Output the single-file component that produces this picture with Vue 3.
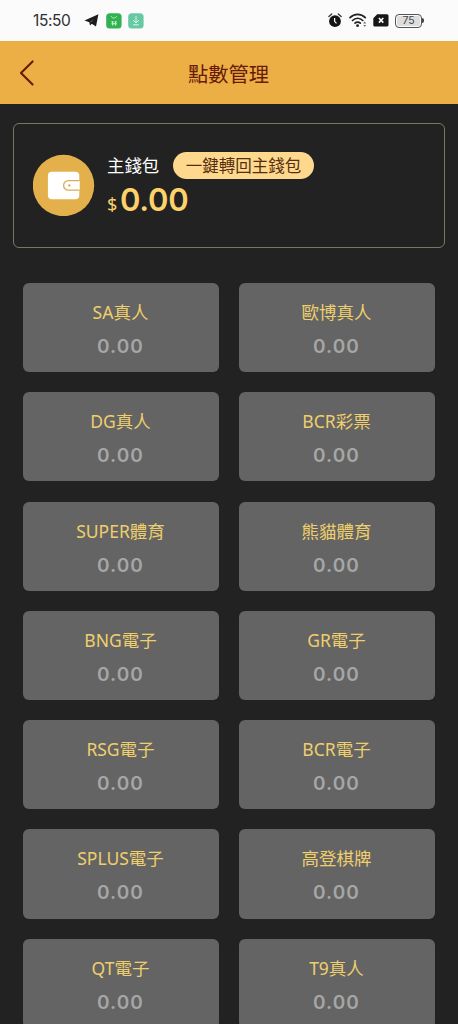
<script setup>
const wallets = [
  'SA真人', '歐博真人',
  'DG真人', 'BCR彩票',
  'SUPER體育', '熊貓體育',
  'BNG電子', 'GR電子',
  'RSG電子', 'BCR電子',
  'SPLUS電子', '高登棋牌',
  'QT電子', 'T9真人',
].map((name) => ({ name, balance: '0.00' }))
</script>

<template>
  <div class="screen">
    <div class="status">
      <span class="time">15:50</span>
      <svg class="plane" width="15" height="13" viewBox="0 0 15 13">
        <path d="M14.4.3 12 12.6 7.8 9.8 6 11.6 5.3 8.2.5 6.6Z" fill="#1c1c1c" />
        <path d="M5.8 8.1 10.4 4.4 6.9 8.6" fill="#666" />
      </svg>
      <svg class="bag" width="16" height="16" viewBox="0 0 16 16">
        <rect x=".2" y=".2" width="15.4" height="15.4" rx="3.6" fill="#31b150" />
        <path d="M5.2 3.2c.6 2.4 4.8 2.4 5.4 0" fill="none" stroke="#b9efc3" stroke-width="1" />
        <path d="M5.4 8.7h2.2M8.6 8.7h2.2M5.4 10.7h5.4M6.6 8.4v4.2M9.6 8.4v4.2" fill="none" stroke="#c9f5d0" stroke-width="1.1" />
      </svg>
      <svg class="down" width="16" height="16" viewBox="0 0 16 16">
        <rect x=".2" y=".2" width="15.4" height="15.4" rx="3.6" fill="#66c9a4" />
        <path d="M8 3.2v6.6M5.2 7.2 8 10l2.8-2.8M5.2 11.8h5.6" fill="none" stroke="#d8f8ea" stroke-width="1" />
      </svg>
      <span class="grow"></span>
      <svg class="alarm" width="14" height="15" viewBox="0 0 14 15">
        <circle cx="7" cy="8.2" r="5.9" fill="#151515" />
        <path d="M.9 3.6 3.7 1M13.1 3.6 10.3 1" stroke="#333" stroke-width="1.3" stroke-linecap="round" />
        <path d="M6.6 5v3.3l1.9 2" fill="none" stroke="#fff" stroke-width="1.2" />
      </svg>
      <svg class="wifi" width="19" height="15" viewBox="0 0 19 15">
        <g fill="none" stroke="#222" stroke-width="1.7" stroke-linecap="round">
          <path d="M1 4.6C5.3.2 12 .2 16.3 4.6" />
          <path d="M3.5 7.5c3-3 7.3-3 10.3 0" />
          <path d="M6 10.2c1.5-1.5 3.8-1.5 5.3 0" />
        </g>
        <circle cx="8.6" cy="12.7" r="1.4" fill="#222" />
        <path d="m14.2 10.4 1.5-1.8 1.5 1.8ZM14.2 12l1.5 1.8 1.5-1.8Z" fill="#666" />
      </svg>
      <svg class="sim" width="16" height="13" viewBox="0 0 16 13">
        <path d="M4.2.3H14a1.5 1.5 0 0 1 1.5 1.5v9A1.5 1.5 0 0 1 14 12.5H1.8A1.5 1.5 0 0 1 .3 11V4.2Z" fill="#171717" />
        <path d="m5.9 4 4.4 4.6m0-4.6L5.9 8.6" stroke="#fff" stroke-width="1.6" />
      </svg>
      <span class="battery">75</span>
      <span class="tip"></span>
    </div>

    <header class="bar">
      <svg class="back" width="16" height="28" viewBox="0 0 16 28">
        <path d="M13.6 2.4 2 14l11.6 11.4" fill="none" stroke="#681b08" stroke-width="2.1" stroke-linecap="round" stroke-linejoin="round" />
      </svg>
      <h1>點數管理</h1>
    </header>

    <section class="main-wallet">
      <svg width="62" height="62" viewBox="0 0 62 62">
        <circle cx="30.5" cy="31.5" r="30.7" fill="#e3b04c" />
        <rect x="14.9" y="17.7" width="31.4" height="27.6" rx="4" fill="#fff" />
        <path d="M46.6 26.6H35.4a4.7 4.7 0 0 0 0 9.6H46.6" fill="#fff" stroke="#d5af59" stroke-width="1.3" />
        <circle cx="36.3" cy="31.4" r="1.2" fill="#d5af59" />
      </svg>
      <div class="info">
        <div class="top">
          <span class="label">主錢包</span>
          <button class="transfer">一鍵轉回主錢包</button>
        </div>
        <div class="amount"><span class="currency">$</span><span class="value">0.00</span></div>
      </div>
    </section>

    <main class="grid">
      <article v-for="w in wallets" :key="w.name" class="card">
        <div class="name">{{ w.name }}</div>
        <div class="balance">{{ w.balance }}</div>
      </article>
    </main>
  </div>
</template>

<style>
body {
  background: #222;
  overflow: hidden;
}
</style>

<style scoped>
.screen {
  box-sizing: border-box;
  width: 458px;
  height: 1024px;
  overflow: hidden;
  background: #222;
  font-family: "Noto Sans", "Noto Sans CJK TC", sans-serif;
}
.status {
  display: flex;
  align-items: center;
  box-sizing: border-box;
  height: 41px;
  padding: 0 34px 0 33px;
  background: #fbfbfb;
}
.time {
  width: 51px;
  font: 400 15.5px/20px Inter, sans-serif;
  letter-spacing: -0.4px;
  color: #303030;
}
.bag { margin-left: 7px; }
.down { margin-left: 6px; }
.grow { flex: 1; }
.alarm { margin-right: 7px; }
.wifi { margin-right: 5px; }
.sim { margin-right: 6px; }
.battery {
  box-sizing: border-box;
  width: 27px;
  height: 14px;
  border: 1px solid #555;
  border-radius: 4px;
  background: #ddd;
  box-shadow: inset 0 0 0 1px #fafafa;
  font: 400 10.5px/12px Inter, sans-serif;
  text-align: center;
  color: #444;
}
.tip {
  width: 2px;
  height: 5px;
  border-radius: 0 2px 2px 0;
  background: #444;
}
.bar {
  display: flex;
  align-items: center;
  box-sizing: border-box;
  height: 63px;
  padding: 0 19px;
  background: #ebaf45;
}
h1 {
  flex: 1;
  margin: 0 17px 0 0;
  text-align: center;
  font: 400 20.3px/30px "Noto Sans CJK TC", sans-serif;
  color: #681b08;
}
.main-wallet {
  display: flex;
  align-items: flex-start;
  box-sizing: border-box;
  width: 432px;
  height: 125px;
  margin: 19px 0 0 13px;
  padding: 30px 0 0 19px;
  border: 1px solid #79775f;
  border-radius: 6px;
}
.info { margin-left: 12px; margin-top: -2px; }
.top { display: flex; align-items: center; }
.label {
  width: 66px;
  font-size: 17.4px;
  line-height: 27px;
  color: #fff;
}
.transfer {
  width: 141px;
  height: 27px;
  padding: 0;
  border: 0;
  border-radius: 14px;
  background: #fed88d;
  font: 400 16.5px/27px "Noto Sans CJK TC", sans-serif;
  color: #552e10;
}
.amount {
  display: flex;
  align-items: baseline;
  height: 40px;
  padding-top: 1px;
  line-height: 40px;
  color: #fdd26b;
}
.currency { width: 13px; font-size: 18px; }
.value {
  font-family: Inter, sans-serif;
  font-size: 31px;
  font-weight: 600;
  letter-spacing: -0.3px;
}
.grid {
  display: grid;
  grid-template-columns: 196px 196px;
  grid-auto-rows: 89.2px;
  gap: 20.1px 20px;
  padding: 35px 23px 0;
}
.card {
  box-sizing: border-box;
  padding-top: 16px;
  padding-right: 1px;
  border-radius: 6px;
  background: #646464;
  text-align: center;
}
.name {
  font-size: 17.5px;
  line-height: 26px;
  color: #efcf6c;
}
.balance {
  margin-top: 9px;
  font: 600 19px/26px Inter, sans-serif;
  letter-spacing: 1.1px;
  color: #a6a6a6;
}
</style>
